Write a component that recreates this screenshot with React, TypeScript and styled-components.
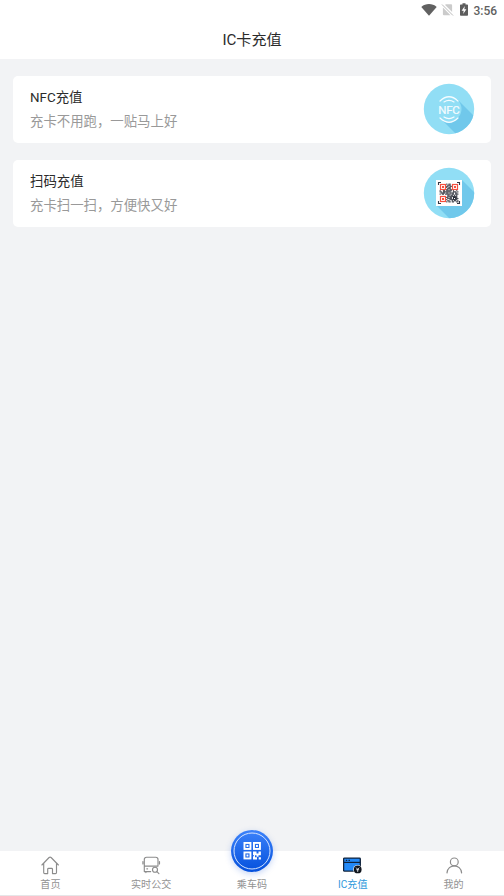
import React from "react";
import styled, { createGlobalStyle } from "styled-components";

const Global = createGlobalStyle`
  * { box-sizing: border-box; }
  body { margin: 0; background: #f2f3f5; }
`;

const Screen = styled.div`
  display: flex;
  flex-direction: column;
  width: 504px;
  height: 896px;
  overflow: hidden;
  background: #f2f3f5;
  font-family: Roboto, "Noto Sans CJK SC", sans-serif;
`;

const StatusBar = styled.div`
  display: flex;
  flex: none;
  align-items: center;
  justify-content: flex-end;
  height: 20px;
  padding-right: 7px;
  background: #fff;
`;

const Clock = styled.span`
  width: 23.5px;
  margin-left: 6px;
  color: #5f5f5f;
  font-size: 12px;
  font-weight: 500;
  line-height: 20px;
  padding-top: 1px;
  white-space: nowrap;
`;

const Header = styled.header`
  flex: none;
  height: 39px;
  padding-top: 1px;
  background: #fff;
  color: #2b2b2b;
  font-size: 15.1px;
  line-height: 39px;
  text-align: center;
`;

const CardList = styled.main`
  display: flex;
  flex: 1;
  flex-direction: column;
  gap: 17px;
  padding: 17px 13px 0;
`;

const Card = styled.section`
  display: flex;
  align-items: center;
  justify-content: space-between;
  height: 67px;
  padding: 0 16px 0 17px;
  border-radius: 5px;
  background: #fff;

  > svg { margin-bottom: 2px; }
`;

const CardText = styled.div`
  display: flex;
  flex-direction: column;
  font-size: 13.4px;
  line-height: 23.5px;
`;

const CardTitle = styled.span`
  color: #2b2b2b;
`;

const CardHint = styled.span`
  color: #999;
`;

const BottomNav = styled.nav`
  display: flex;
  flex: none;
  height: 45px;
  background: #fff;
  border-bottom: 1px solid #e6e6e8;
`;

const NavItem = styled.div<{ $active?: boolean }>`
  display: flex;
  flex: 1;
  flex-direction: column;
  align-items: center;
  justify-content: flex-end;
  padding-bottom: 3px;
  color: ${(p) => (p.$active ? "#2e98dc" : "#929292")};
  font-size: 10.08px;
  line-height: 15px;
`;

const IconSlot = styled.div`
  display: flex;
  align-items: center;
  height: 20px;
  margin-bottom: 2px;
`;

const RideButton = styled.div`
  display: flex;
  flex: none;
  align-items: center;
  justify-content: center;
  width: 42px;
  height: 42px;
  margin-bottom: 5px;
  border-radius: 50%;
  background: linear-gradient(#3c82fa, #0450dc);
  box-shadow: 0 2px 6px rgba(30, 90, 220, 0.25);
`;

const WifiIcon = () => (
  <svg width="16" height="13" viewBox="0 0 16 13">
    <path d="M.3 3.900C4.800.1 11.200.1 15.700 3.900L8 12.700Z" fill="#616161" />
  </svg>
);

const NoSimIcon = () => (
  <svg width="13" height="13" viewBox="0 0 13 13">
    <path d="M4.800 1.200H10.100Q11.100 1.200 11.100 2.200V8.900L4.100 1.900ZM1.900 4.600L9.500 12.200H2.900Q1.900 12.200 1.900 11.200Z" fill="#cbcbcb" />
    <path d="M1 1.500L12 12.500" stroke="#b9b9b9" strokeWidth="1" />
  </svg>
);

const BatteryIcon = () => (
  <svg width="8" height="13" viewBox="0 0 8 13">
    <path d="M2.500 .2H5.500V1.400H7.200Q8 1.400 8 2.200V11.900Q8 12.700 7.200 12.700H.8Q0 12.700 0 11.900V2.200Q0 1.400 .8 1.400H2.500Z" fill="#5d5d5d" />
    <path d="M4.800 3.100L1.600 7.700H3.700L3.200 10.900L6.400 6.300H4.300Z" fill="#fff" />
  </svg>
);

const StatusIcons = styled.div`
  display: flex;
  align-items: center;
  gap: 4px;
  padding-bottom: 1px;
  svg:last-child { margin-left: 2px; }
`;

const NfcBadge = () => (
  <svg width="52" height="52" viewBox="0 0 52 52">
    <defs>
      <clipPath id="nfcDisc"><circle cx="26" cy="26" r="25.200" /></clipPath>
    </defs>
    <circle cx="26" cy="26" r="25.200" fill="#91def5" />
    <g clipPath="url(#nfcDisc)">
      <path d="M34 16L56 38V56H38L17 35Z" fill="#70c8eb" />
    </g>
    <circle cx="26" cy="26" r="12.500" fill="#91def5" />
    <g fill="none" stroke="#f5fcff" strokeLinecap="round">
      <path d="M17 18Q26 9.500 35 18M17 35Q26 43.500 35 35" strokeWidth="1.200" />
      <path d="M21 18.900Q26 15.700 31 18.900M21 34Q26 37.200 31 34" strokeWidth="1.200" />
    </g>
    <text x="26" y="30.700" textAnchor="middle" textLength="21.500" fill="#f5fcff" stroke="#f5fcff" strokeWidth=".2" fontFamily="Roboto, sans-serif" fontSize="11.500" fontWeight="400">NFC</text>
  </svg>
);

// Dark modules of the decorative code, 17 columns wide; finder corners are drawn separately.
const modules = [
  "......#.##.......",
  ".......###.......",
  "......##.##......",
  "......#.##.......",
  ".......###.......",
  "......##.##......",
  "#..##.#####.#..#.",
  "##.#######..###.#",
  ".####.##.####.##.",
  "#.##.#####.##.###",
  ".......##.##.#.#.",
  ".......#########.",
  "......##.##.####.",
  ".......####.#.###",
  "......#..#######.",
  ".......##..#.##.#",
  "......#.##.##..##",
];

const ScanBadge = () => (
  <svg width="52" height="52" viewBox="0 0 52 52">
    <defs>
      <clipPath id="scanDisc"><circle cx="26" cy="26" r="25.200" /></clipPath>
    </defs>
    <circle cx="26" cy="26" r="25.200" fill="#91def5" />
    <g clipPath="url(#scanDisc)">
      <path d="M39 13L57 31V57H32L13 38Z" fill="#70c8eb" />
    </g>
    <rect x="13" y="13" width="26" height="26" fill="#fff" />
    <path d="M15.500 18V15.500H18M34 15.500H36.500V18M36.500 34V36.500H34M18 36.500H15.500V34" fill="none" stroke="#333844" strokeWidth="1.100" />
    <g transform="translate(16.600 16.600) scale(1.106)" fill="#20242f">
      {modules.map((row, y) =>
        row.split("").map((cell, x) =>
          cell === "#" ? <rect key={`${x}-${y}`} x={x} y={y} width="1" height="1" /> : null,
        ),
      )}
    </g>
    {[[17, 17], [29, 17], [17, 29]].map(([x, y]) => (
      <g key={`${x}-${y}`} fill="#f5503f">
        <rect x={x + 0.500} y={y + 0.500} width="5" height="5" fill="#fff" stroke="#f5503f" strokeWidth="1.200" />
        <rect x={x + 2} y={y + 2} width="2" height="2" />
      </g>
    ))}
  </svg>
);

const HomeIcon = () => (
  <svg width="20" height="20" viewBox="0 0 20 20" fill="none" stroke="#8c8c8c" strokeWidth="1.150" strokeLinejoin="round" strokeLinecap="round">
    <path d="M1.900 10L9.100 2.500Q10.100 1.600 11.100 2.500L18.400 10M3.700 8.300V17.500Q3.700 18.600 4.800 18.600H7.700V14.300Q7.700 13.400 8.600 13.400H11.600Q12.500 13.400 12.500 14.300V18.600H15.400Q16.500 18.600 16.500 17.500V8.300" />
  </svg>
);

const BusIcon = () => (
  <svg width="20" height="20" viewBox="0 0 20 20" fill="none" stroke="#8c8c8c" strokeWidth="1.150" strokeLinecap="round" strokeLinejoin="round">
    <path d="M17 10.500V4.500Q17 2.200 14.700 2.200H5.600Q3.300 2.200 3.300 4.500V16.600H9.700M3.300 11.100H17M4.900 16.600V17.600M1.900 6.500V9M18.500 6.500V9M5.800 13.800H6.600" />
    <circle cx="14" cy="14.700" r="2.500" fill="#fff" />
    <path d="M15.900 16.600L17.900 18.600" />
  </svg>
);

const RideCodeIcon = () => (
  <svg width="42" height="42" viewBox="0 0 42 42">
    <circle cx="21" cy="21" r="18" fill="none" stroke="#d5e4ff" strokeWidth="1" />
    <g fill="none" stroke="#fff" strokeWidth="1.900">
      <rect x="13.450" y="12.950" width="6" height="6" />
      <rect x="22.950" y="12.950" width="6" height="6" />
      <rect x="13.450" y="22.450" width="6" height="6" />
    </g>
    <g fill="#fff">
      <path d="M15.500 15h1.900v1.900h-1.900zM25 15h1.900v1.900h-1.900zM15.500 24.500h1.900v1.900h-1.900z" />
      <path d="M22 21.500h3.500v2h2v-2h2.400v3.700h-2.400v1.500h-2v-1.500h-1.500v2h2v2.200h-4v-3.200h1v-1h-1zM27.700 27.200h2.200v2.200h-2.200z" />
    </g>
  </svg>
);

const RechargeIcon = () => (
  <svg width="20" height="20" viewBox="0 0 20 20">
    <rect x=".6" y="3.100" width="16.700" height="13" rx=".8" fill="#238af8" stroke="#10233c" strokeWidth="1.300" />
    <path d="M.6 7.400H17.300" stroke="#10233c" strokeWidth="1.200" />
    <path d="M2.800 5.300H4.200M5.500 5.300H6.900" stroke="#10233c" strokeWidth="1.200" />
    <circle cx="14.700" cy="14.400" r="4.500" fill="#fff" />
    <circle cx="14.700" cy="14.400" r="3.900" fill="#10151d" />
    <path d="M13.100 12.600L14.700 14.300L16.300 12.600M14.700 14.300V16.900M13.300 14.700H16.100" fill="none" stroke="#fff" strokeWidth=".8" />
  </svg>
);

const PersonIcon = () => (
  <svg width="20" height="20" viewBox="0 0 20 20" fill="none" stroke="#8c8c8c" strokeWidth="1.200" strokeLinecap="round">
    <circle cx="10.300" cy="6.900" r="3.900" />
    <path d="M3 17.900C3.500 8.500 17.100 8.500 17.600 17.900" />
  </svg>
);

const cards = [
  { title: "NFC充值", hint: "充卡不用跑，一贴马上好", badge: <NfcBadge /> },
  { title: "扫码充值", hint: "充卡扫一扫，方便快又好", badge: <ScanBadge /> },
];

export default function App() {
  return (
    <>
      <Global />
      <Screen>
        <StatusBar>
          <StatusIcons>
            <WifiIcon />
            <NoSimIcon />
            <BatteryIcon />
          </StatusIcons>
          <Clock>3:56</Clock>
        </StatusBar>
        <Header>IC卡充值</Header>
        <CardList>
          {cards.map((card) => (
            <Card key={card.title}>
              <CardText>
                <CardTitle>{card.title}</CardTitle>
                <CardHint>{card.hint}</CardHint>
              </CardText>
              {card.badge}
            </Card>
          ))}
        </CardList>
        <BottomNav>
          <NavItem><IconSlot><HomeIcon /></IconSlot>首页</NavItem>
          <NavItem><IconSlot><BusIcon /></IconSlot>实时公交</NavItem>
          <NavItem><RideButton><RideCodeIcon /></RideButton>乘车码</NavItem>
          <NavItem $active><IconSlot><RechargeIcon /></IconSlot>IC充值</NavItem>
          <NavItem><IconSlot><PersonIcon /></IconSlot>我的</NavItem>
        </BottomNav>
      </Screen>
    </>
  );
}
